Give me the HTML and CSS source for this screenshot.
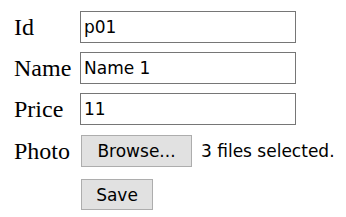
FILE: index.html
```html
<!DOCTYPE html>
<html lang="en">
<head>
    <meta charset="UTF-8">
    <meta name="viewport" content="width=device-width, initial-scale=1.0">
    <title>Product</title>
    <link rel="stylesheet" href="styles.css">
</head>
<body>

<form class="product-form">
    <label for="id">Id</label>
    <input type="text" id="id" value="p01">

    <label for="name">Name</label>
    <input type="text" id="name" value="Name 1">

    <label for="price">Price</label>
    <input type="text" id="price" value="11">

    <label for="photo" class="photo-label">Photo</label>
    <div class="file-picker">
        <button type="button" id="photo" class="btn btn-browse">Browse...</button>
        <span class="file-status">3 files selected.</span>
    </div>

    <span></span>
    <div>
        <button type="button" class="btn btn-save">Save</button>
    </div>
</form>

</body>
</html>
```

FILE: styles.css
```css
body {
    margin: 0;
    background-color: #fff;
    font-family: "Liberation Serif", serif;
}
.product-form {
    display: grid;
    grid-template-columns: 66px auto;
    row-gap: 9px;
    align-items: center;
    padding: 11px 0 0 14px;
}
label {
    font-size: 24px;
    color: #000;
}
input[type="text"] {
    width: 216px;
    height: 32px;
    box-sizing: border-box;
    margin: 0;
    padding: 0 3px;
    border: 1px solid #767676;
    font-family: "DejaVu Sans", sans-serif;
    font-size: 17px;
    color: #000;
}
.photo-label {
    margin-top: 1px;
}
.file-picker {
    display: flex;
    align-items: center;
    gap: 9px;
    margin: 1px 0 0 1px;
}
.file-status {
    font-family: "DejaVu Sans", sans-serif;
    font-size: 17px;
}
.btn {
    height: 32px;
    box-sizing: border-box;
    margin: 0;
    padding: 0;
    background-color: #e1e1e1;
    border: 1px solid #adadad;
    font-family: "DejaVu Sans", sans-serif;
    font-size: 17px;
    color: #000;
}
.btn-browse {
    width: 111px;
}
.btn-save {
    width: 72px;
    height: 31px;
    margin: 3px 0 0 1px;
}
```
